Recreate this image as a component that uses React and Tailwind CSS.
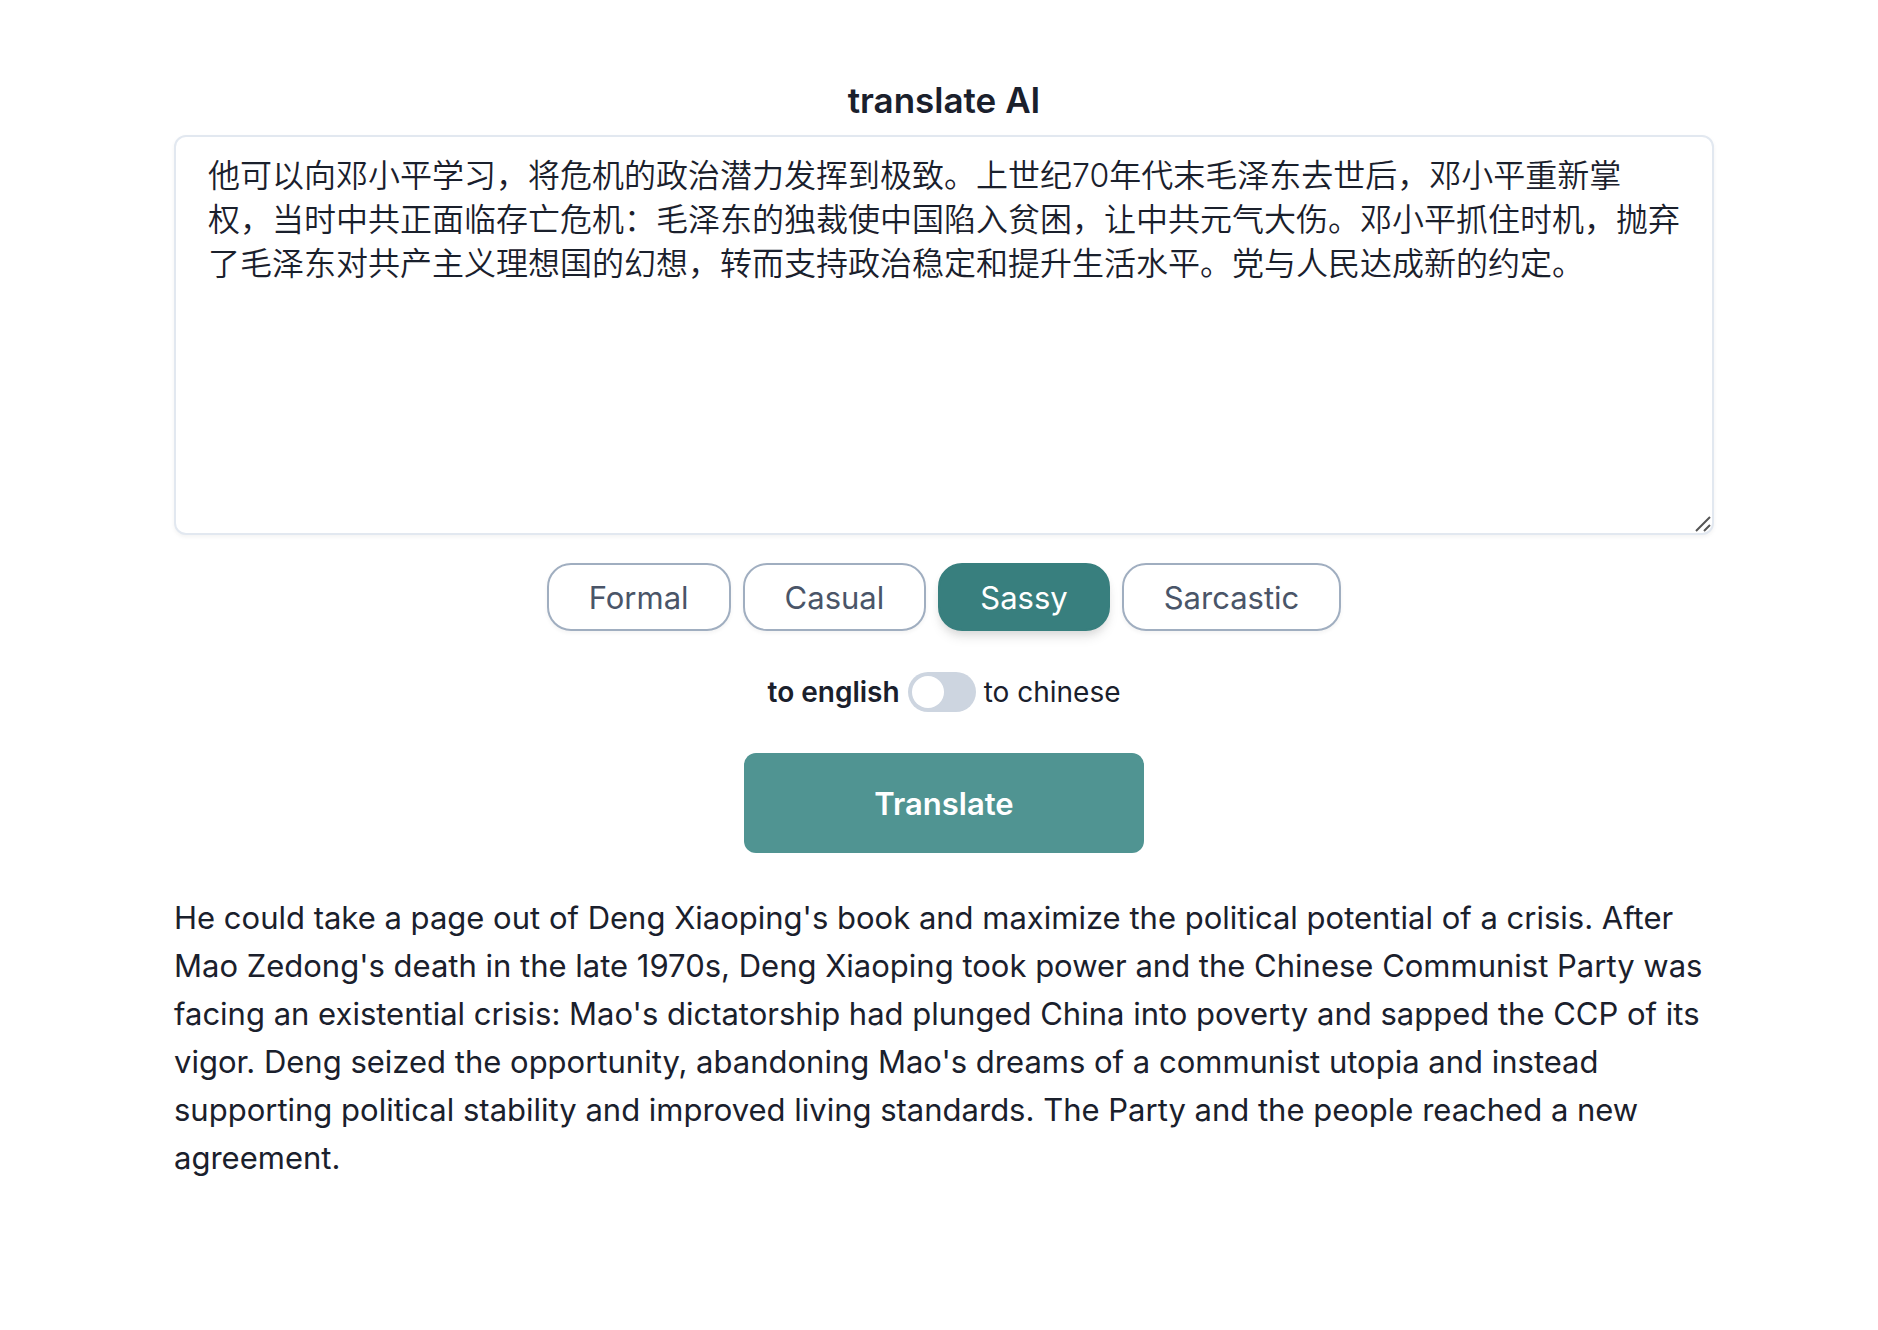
import { useState } from "react";

const SOURCE_TEXT =
  "他可以向邓小平学习，将危机的政治潜力发挥到极致。上世纪70年代末毛泽东去世后，邓小平重新掌权，当时中共正面临存亡危机：毛泽东的独裁使中国陷入贫困，让中共元气大伤。邓小平抓住时机，抛弃了毛泽东对共产主义理想国的幻想，转而支持政治稳定和提升生活水平。党与人民达成新的约定。";

const RESULT_TEXT =
  "He could take a page out of Deng Xiaoping's book and maximize the political potential of a crisis. After Mao Zedong's death in the late 1970s, Deng Xiaoping took power and the Chinese Communist Party was facing an existential crisis: Mao's dictatorship had plunged China into poverty and sapped the CCP of its vigor. Deng seized the opportunity, abandoning Mao's dreams of a communist utopia and instead supporting political stability and improved living standards. The Party and the people reached a new agreement.";

const TONES = ["Formal", "Casual", "Sassy", "Sarcastic"];

function ToneButton({ label, selected, onSelect }) {
  const look = selected
    ? "border-[#387f7e] bg-[#387f7e] text-white shadow-[0_8px_12px_-2px_rgba(0,0,0,0.1),0_4px_8px_-2px_rgba(0,0,0,0.08)]"
    : "border-[#a0aec0] bg-white text-[#4a5568] shadow-[0_2px_4px_rgba(0,0,0,0.05)]";
  return (
    <button
      type="button"
      aria-pressed={selected}
      onClick={onSelect}
      className={`rounded-3xl border-2 px-10 pt-[9px] pb-[7px] text-[31px] leading-[48px] ${look}`}
    >
      {label}
    </button>
  );
}

export default function App() {
  const [source, setSource] = useState(SOURCE_TEXT);
  const [tone, setTone] = useState("Sassy");
  const [toChinese, setToChinese] = useState(false);

  return (
    <main
      lang="en"
      className="flex min-h-screen flex-col items-center bg-white pt-19 pr-[164px] pb-20 pl-[174px] font-['Inter','Noto_Sans_CJK_SC',sans-serif] text-[#1a202c]"
    >
      <h1 className="mb-[11px] text-[35px] leading-[48px] font-semibold">translate AI</h1>

      <div className="relative w-full">
        <textarea
          lang="zh-CN"
          aria-label="Text to translate"
          spellCheck={false}
          value={source}
          onChange={(e) => setSource(e.target.value)}
          className="block h-100 w-full resize-none rounded-xl border-2 border-[#e2e8f0] bg-white px-8 pt-[17px] pb-4 text-[32px] leading-[44px] font-[350] shadow-[0_2px_4px_rgba(0,0,0,0.05)] outline-none"
        />
        <svg
          aria-hidden="true"
          viewBox="0 0 16 16"
          className="pointer-events-none absolute right-[3px] bottom-[3px] size-4"
          fill="none"
          stroke="#555"
          strokeWidth="2"
        >
          <path d="M1 15 15 1M9 15l6-6" />
        </svg>
      </div>

      <div className="mt-7 flex flex-wrap justify-center gap-3">
        {TONES.map((t) => (
          <ToneButton key={t} label={t} selected={t === tone} onSelect={() => setTone(t)} />
        ))}
      </div>

      <label className="mt-10 flex cursor-pointer items-center gap-2 text-[28px] leading-[42px]">
        <span className={toChinese ? "" : "font-semibold"}>to english</span>
        <input
          type="checkbox"
          role="switch"
          checked={toChinese}
          onChange={(e) => setToChinese(e.target.checked)}
          className="h-10 w-17 cursor-pointer appearance-none rounded-full bg-[#cdd5e0] p-1 before:block before:size-8 before:rounded-full before:bg-white checked:bg-[#387f7e] checked:before:ml-7"
        />
        <span className={toChinese ? "font-semibold" : ""}>to chinese</span>
      </label>

      <button
        type="button"
        className="mt-10 h-25 w-100 rounded-xl bg-[#509492] pt-[2px] text-[31px] leading-[48px] font-semibold text-white"
      >
        Translate
      </button>

      <p className="mt-[41px] w-full text-[31px] leading-[48px]">{RESULT_TEXT}</p>
    </main>
  );
}
